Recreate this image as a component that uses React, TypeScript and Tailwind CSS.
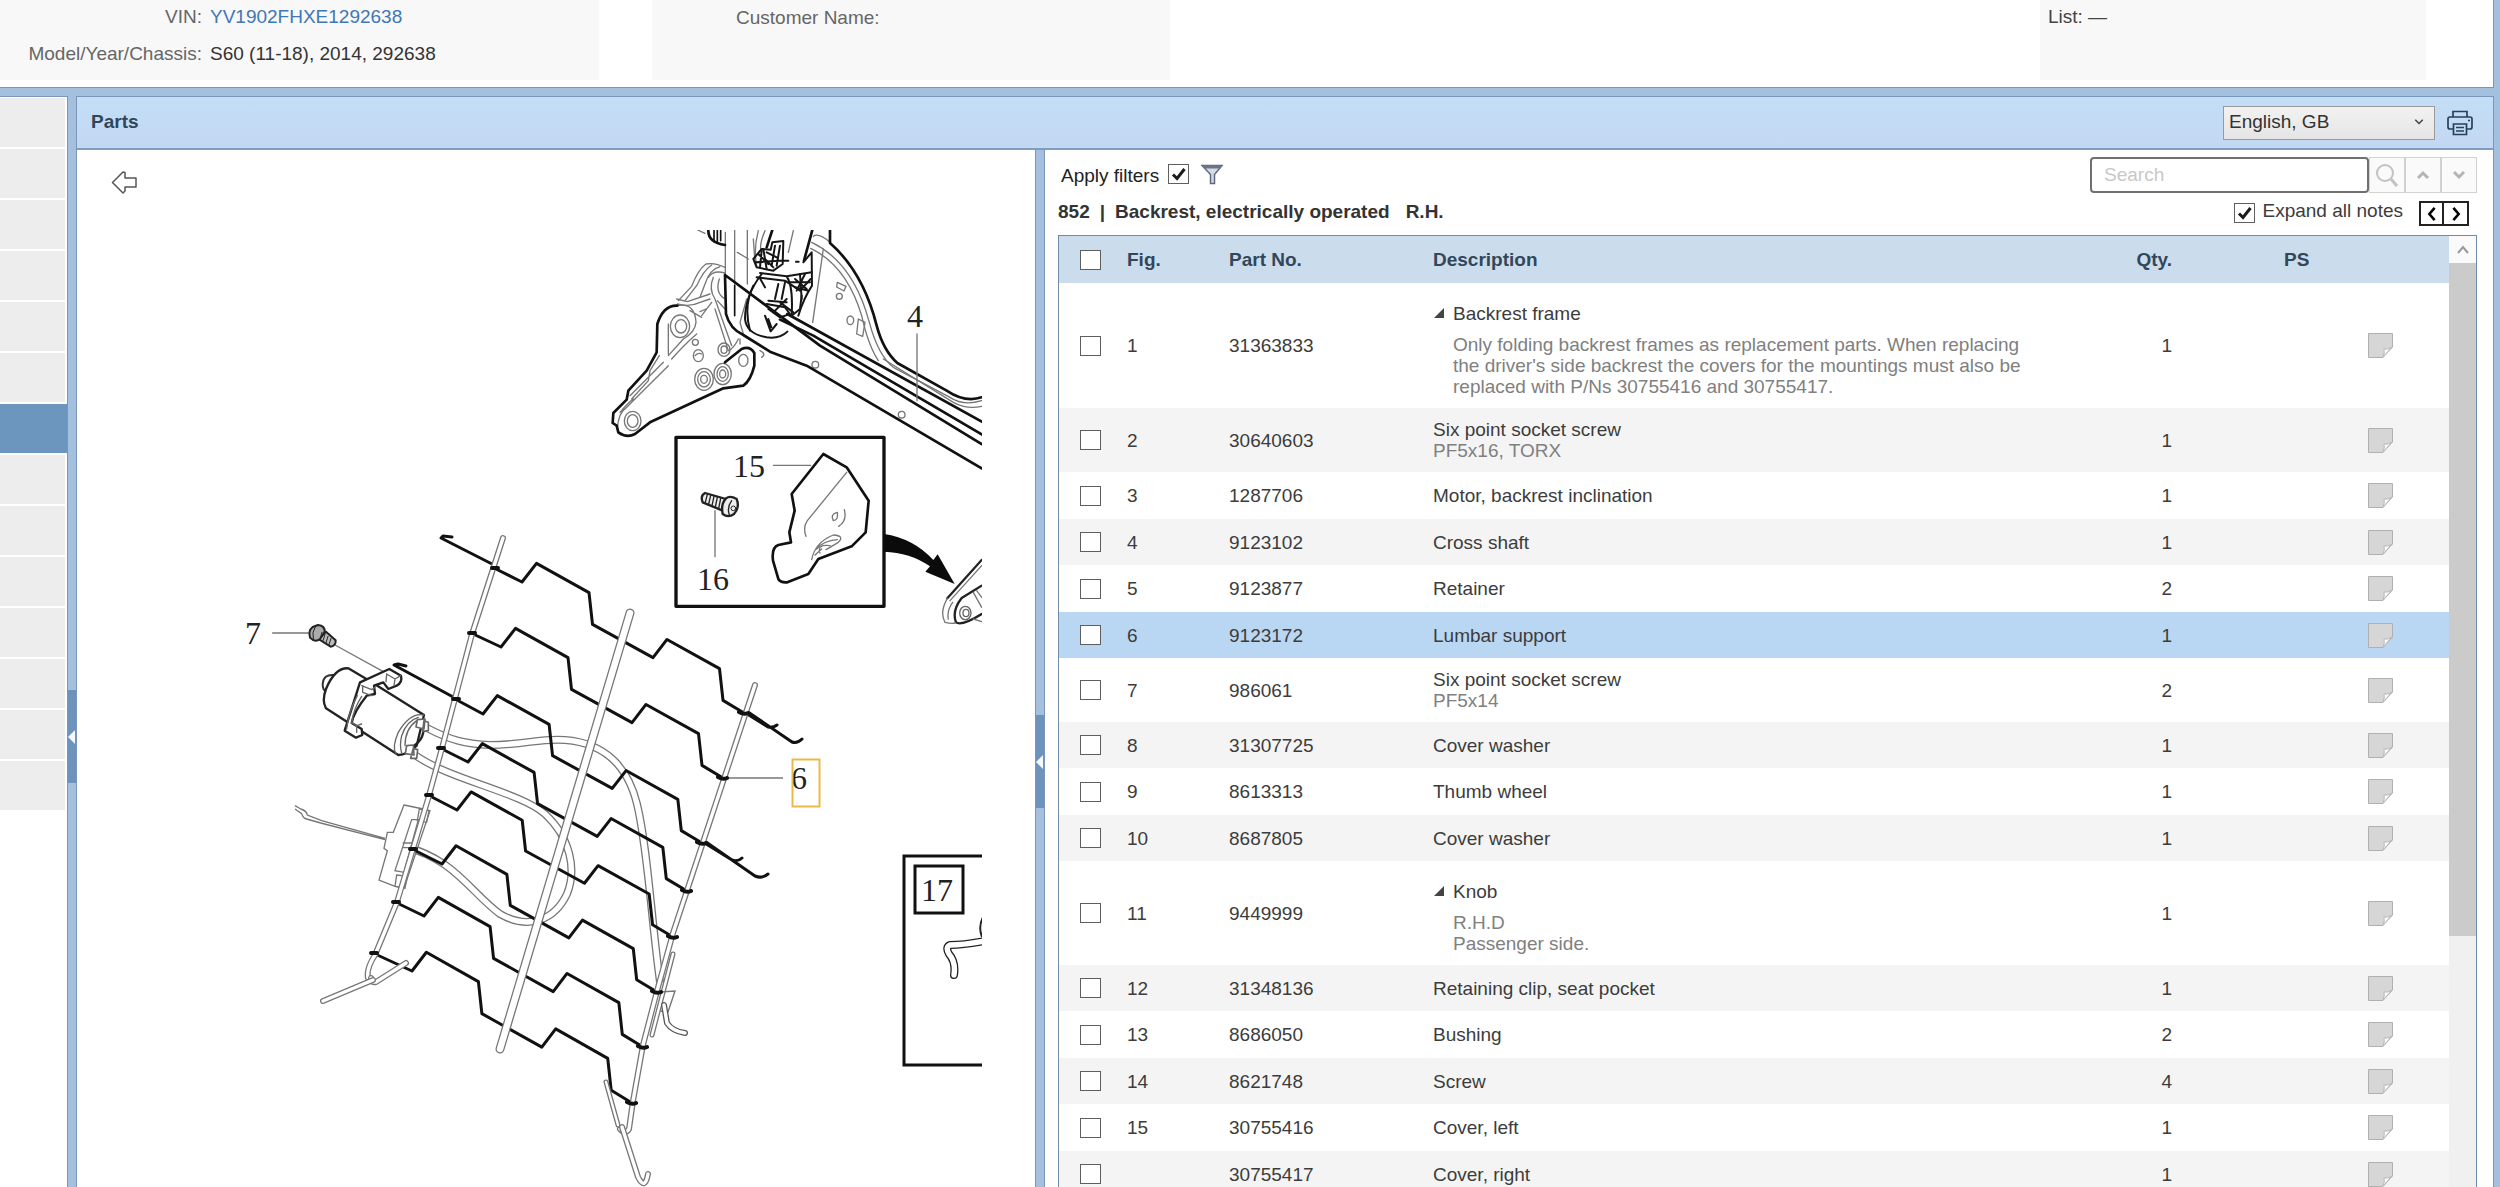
import type { ReactNode } from "react";

type Part = {
  fig: string;
  no: string;
  name: string;
  sub?: string;
  notes?: string[];
  qty: number;
};

const PARTS: Part[] = [
  {
    fig: "1",
    no: "31363833",
    name: "Backrest frame",
    notes: [
      "Only folding backrest frames as replacement parts. When replacing the driver's side backrest the covers for the mountings must also be replaced with P/Ns 30755416 and 30755417.",
    ],
    qty: 1,
  },
  { fig: "2", no: "30640603", name: "Six point socket screw", sub: "PF5x16, TORX", qty: 1 },
  { fig: "3", no: "1287706", name: "Motor, backrest inclination", qty: 1 },
  { fig: "4", no: "9123102", name: "Cross shaft", qty: 1 },
  { fig: "5", no: "9123877", name: "Retainer", qty: 2 },
  { fig: "6", no: "9123172", name: "Lumbar support", qty: 1 },
  { fig: "7", no: "986061", name: "Six point socket screw", sub: "PF5x14", qty: 2 },
  { fig: "8", no: "31307725", name: "Cover washer", qty: 1 },
  { fig: "9", no: "8613313", name: "Thumb wheel", qty: 1 },
  { fig: "10", no: "8687805", name: "Cover washer", qty: 1 },
  { fig: "11", no: "9449999", name: "Knob", notes: ["R.H.D", "Passenger side."], qty: 1 },
  { fig: "12", no: "31348136", name: "Retaining clip, seat pocket", qty: 1 },
  { fig: "13", no: "8686050", name: "Bushing", qty: 2 },
  { fig: "14", no: "8621748", name: "Screw", qty: 4 },
  { fig: "15", no: "30755416", name: "Cover, left", qty: 1 },
  { fig: "", no: "30755417", name: "Cover, right", qty: 1 },
];

const SELECTED_FIG = "6";
const SIDEBAR_ROWS = 14;
const SIDEBAR_SELECTED = 6;

function Checkbox({ id, label, checked = false }: { id: string; label?: string; checked?: boolean }) {
  return (
    <span className="relative block h-5 w-[21px] shrink-0">
      <input
        id={id}
        type="checkbox"
        aria-label={label}
        defaultChecked={checked}
        className="peer block h-5 w-[21px] appearance-none border border-[#5e5e5e] bg-white"
      />
      <svg
        viewBox="0 0 21 20"
        className="pointer-events-none absolute inset-0 hidden peer-checked:block"
        fill="none"
        stroke="#1c1c1c"
        strokeWidth="3"
      >
        <path d="M5 10.5 9 14.5 16.5 5" />
      </svg>
    </span>
  );
}

function NoteIcon() {
  return (
    <svg width="25" height="25" viewBox="0 0 25 25">
      <path d="M.5.5H24.500V14L15 24.500H.5Z" fill="#d6d6d6" stroke="#b0b0b0" />
      <path d="M24 14 15 24Q17 20 16 16Q20 17 24 14Z" fill="#fff" stroke="#b8b8b8" />
    </svg>
  );
}

function PrinterIcon() {
  return (
    <svg width="26" height="26" viewBox="0 0 26 26" fill="none" stroke="#27405c" strokeWidth="1.700">
      <path d="M6 7V1.500H20V7" />
      <path d="M6 19H3Q1 19 1 17V9Q1 7 3 7H23Q25 7 25 9V17Q25 19 23 19H20" />
      <path d="M6.500 14H19.500V24.500H6.500Z" />
      <path d="M9 17.500H17M9 21H17" strokeWidth="1.500" />
      <path d="M21 10.500H23" />
    </svg>
  );
}

function FunnelIcon() {
  return (
    <svg width="22" height="21" viewBox="0 0 22 21">
      <path
        d="M1 1.500H21L13.500 10.500V19.500H9.500V10.500Z"
        fill="#d5dbe6"
        stroke="#606a7c"
        strokeWidth="1.500"
      />
      <path d="M1 1.500H21L19 4.500H3Z" fill="#6c7587" />
    </svg>
  );
}

function Chevron({ d, width = 3, className }: { d: string; width?: number; className?: string }) {
  return (
    <svg viewBox="0 0 16 16" fill="none" stroke="currentColor" strokeWidth={width} className={className}>
      <path d={d} />
    </svg>
  );
}

function Splitter({ label, className }: { label: string; className: string }) {
  return (
    <div className={`flex w-[10px] shrink-0 flex-col border-x border-[#7a97b8] bg-[#a5c0de] ${className}`}>
      <button aria-label={label} className="flex h-[93px] w-full items-center bg-[#6d93bc]">
        <svg width="7" height="14" viewBox="0 0 7 14">
          <path d="M0 7 7 0V14Z" fill="#f4f8fc" />
        </svg>
      </button>
    </div>
  );
}

function InfoBox({ className, children }: { className: string; children: ReactNode }) {
  return <div className={`h-20 bg-[#f8f8f8] ${className}`}>{children}</div>;
}

// Tubes are drawn as a grey stroke with a thinner white one on top
function Tube({ d, w = 7, stroke = "#777" }: { d: string; w?: number; stroke?: string }) {
  return (
    <g fill="none" strokeLinecap="round" strokeLinejoin="round">
      <path d={d} stroke={stroke} strokeWidth={w} />
      <path d={d} stroke="#fff" strokeWidth={w - 2.6} />
    </g>
  );
}

const WIRE_SHAPE = [
  [0, 0],
  [14.5, -18.5],
  [67, 10.5],
  [70.5, 42],
  [131, 75],
  [145, 57],
  [197.5, 86],
  [201, 117.5],
  [222, 130],
];

// clip on the left rod, first bend, clip on the right rod
const WIRES = [
  { left: [494, 569], bend: [522, 583], right: [744, 714] },
  { left: [471, 634], bend: [501, 648], right: [723, 779] },
  { left: [455, 700], bend: [483, 715], right: [702, 844] },
  { left: [440, 749], bend: [468, 763], right: [687, 892] },
  { left: [428, 796], bend: [457, 811], right: [673, 938] },
  { left: [412, 850], bend: [442, 865], right: [657, 993] },
  { left: [395, 903], bend: [424, 917], right: [643, 1048] },
  { left: [373, 954], bend: [412, 972], right: [632, 1104] },
];

function wirePath(wire: (typeof WIRES)[number]) {
  const [bx, by] = wire.bend;
  const sx = (wire.right[0] - bx) / 222;
  const sy = (wire.right[1] - by) / 130;
  const points = WIRE_SHAPE.map(([x, y]) => `${bx + x * sx} ${by + y * sy}`);
  return `M${wire.left.join(" ")} L${points.join(" L")}`;
}

function SeatFrame() {
  return (
    <g transform="translate(600 200) scale(.33333)" fill="none" strokeLinecap="round" strokeLinejoin="round">
      <g stroke="#777" strokeWidth="4">
        <path d="M690 130 Q655 100 640 112 M635 130 Q760 190 808 370 Q835 470 880 505 L1050 595 Q1090 622 1145 605" />
        <path d="M632 148 Q740 200 785 350 Q805 440 835 485 M850 480 L1060 610 Q1100 632 1145 622" />
        <path d="M670 150 L638 370 M712 250 L738 262 L732 276 L710 264Z M775 360 L795 370 L788 412 L770 405Z" />
        <path d="M293 93 L315 103 M376 100 V232 M404 93 V260 M442 93 V255 M412 160 L445 180 M460 120 L465 190 M580 95 L565 160" />
        <path d="M475 95 Q460 150 470 200 M495 95 Q480 130 482 150" />
        <path d="M375 205 Q345 190 318 195 Q295 210 275 262 L235 305 M375 222 Q340 212 325 235 M335 198 Q310 215 290 260 L255 305" />
        <path d="M360 203 Q330 210 315 255 L300 295 M340 235 Q325 270 345 300 L395 440 M358 240 Q345 280 372 298 M352 305 L375 330" />
        <path d="M230 300 L262 308 L330 285 M232 315 Q270 325 300 310 L330 300 M305 350 L335 310 M300 338 L318 330 M345 330 L385 455" />
        <path d="M232 320 Q285 310 288 370 Q285 400 250 420 L205 470 M205 375 V465 M215 480 Q255 435 290 405 M270 335 L305 355" />
        <path d="M178 470 L150 515 L145 545 L95 600 M205 500 L80 625 Q55 640 52 690 M190 490 L90 590 M60 640 Q85 610 100 600" />
        <path d="M415 420 Q400 450 385 455 M480 455 Q500 465 485 475 M420 420 V435 M440 300 L420 370 L430 405" />
        <circle cx="286" cy="430" r="9" />
        <ellipse cx="295" cy="470" rx="15" ry="18" />
        <path d="M285 470 Q295 460 305 465" />
        <ellipse cx="240" cy="382" rx="29" ry="34" />
        <ellipse cx="243" cy="382" rx="17" ry="20" />
        <ellipse cx="312" cy="541" rx="28" ry="33" />
        <ellipse cx="312" cy="541" rx="19" ry="23" />
        <ellipse cx="312" cy="541" rx="10" ry="12" />
        <ellipse cx="368" cy="525" rx="26" ry="32" />
        <ellipse cx="368" cy="525" rx="17" ry="22" />
        <ellipse cx="368" cy="525" rx="9" ry="12" />
        <ellipse cx="372" cy="452" rx="18" ry="20" />
        <ellipse cx="372" cy="452" rx="9" ry="11" />
        <ellipse cx="430" cy="484" rx="14" ry="18" />
        <ellipse cx="98" cy="666" rx="25" ry="29" />
        <ellipse cx="98" cy="666" rx="16" ry="19" />
        <circle cx="646" cy="497" r="10" />
        <circle cx="905" cy="647" r="10" />
        <circle cx="718" cy="292" r="9" />
        <ellipse cx="751" cy="364" rx="10" ry="13" />
      </g>
      <g stroke="#111" strokeWidth="8">
        <path d="M232 320 Q190 318 172 375 L170 460 L140 515 L85 575 L80 602 L40 642 L38 672 L50 680 L55 700 Q80 718 105 705 L150 670 L370 568 L430 560 Q452 545 463 500 V462 Q450 440 425 450 L375 490" />
        <path d="M375 228 L660 440 L1145 735 M375 228 L378 345 Q390 390 430 408 L510 458 L620 500 L1145 808" />
        <path d="M562 345 L1145 668 M540 362 L640 410 L1145 706" />
        <path d="M690 93 V132 Q790 220 830 380 Q850 455 892 492 L1040 575 Q1095 612 1145 595" />
        <path d="M325 95 Q325 130 375 138 M517 93 L500 145 M637 93 L612 185" />
        <path d="M342 95 V128 M352 95 V128 M362 95 V125 M404 260 V350" strokeWidth="5" />
      </g>
      {/* recliner mechanism */}
      <g stroke="#151515" strokeWidth="6">
        <path d="M517 130 L550 126 L548 195 L520 215 L470 205 L460 180 L485 150 L512 152Z" />
        <path d="M525 140 L515 200 M540 140 L530 200 M475 165 L505 195 M485 155 L480 205 M465 190 L540 185 L565 185" />
        <path d="M500 160 L530 175 M495 180 L520 205 M490 150 L500 210 M610 190 L635 160 L636 260 Q610 300 595 350" />
        <path d="M480 222 L560 232 L635 220 M470 235 L555 245 L600 275 L632 240 M560 232 Q580 260 575 350 L600 330 L605 290" />
        <path d="M585 240 L620 270 M600 225 L605 300 M615 225 L590 275 M570 250 L630 250 M585 265 L625 275" />
        <path d="M485 225 Q435 290 435 360 Q440 405 500 415 Q540 420 562 398" />
        <path d="M460 260 Q430 320 450 395 M478 235 L495 265 M500 315 L555 325 L570 345 L540 355 L505 330" />
        <path d="M505 305 L560 310 M520 340 L560 300 M540 310 L580 340 M555 250 L545 300" />
        <path d="M495 350 L512 397 L530 375 M505 360 L514 385 M535 255 L525 300 M588 188 H596" />
      </g>
      <rect x="228" y="715" width="624" height="507" stroke="#111" strokeWidth="10" />
      <path
        d="M670 765 L740 805 L806 905 L797 1000 L755 1042 L655 1080 L625 1125 L562 1150 Q542 1152 535 1140 L519 1085 Q514 1045 535 1038 L573 1030 L568 1000 L584 935 L575 885Z"
        stroke="#111"
        strokeWidth="8"
      />
      <g stroke="#777" strokeWidth="4">
        <path d="M740 820 L622 965 Q608 985 618 1012 M733 932 Q742 965 716 982 M712 940 Q690 945 700 965 Q715 965 712 940" />
        <path d="M635 1082 Q645 1030 700 1008 Q735 1010 715 1030 Q690 1045 678 1052 M650 1050 Q670 1025 712 1022 M660 1062 Q650 1035 690 1040 M645 1068 L665 1050" />
        <path d="M520 799 H632 M345 935 V1073 M951 405 V605" />
      </g>
      {/* screw 16 */}
      <g stroke="#222" strokeWidth="7" fill="#eee">
        <path d="M315 882 L378 900 L368 935 L308 910 Q300 890 315 882Z" />
        <path d="M378 898 Q390 888 410 900 Q420 925 402 945 Q385 958 368 945 Q362 915 378 898Z" />
        <path
          d="M322 886 L316 910 M332 889 L326 915 M342 892 L336 920 M352 895 L346 924 M362 898 L356 928 M395 905 Q380 925 388 948"
          strokeWidth="4"
          fill="none"
        />
        <circle cx="400" cy="928" r="7" strokeWidth="3" />
      </g>
      <path
        d="M852 1005 Q940 1018 1000 1083 L1013 1066 L1064 1155 L976 1118 L990 1102 Q930 1060 852 1058Z"
        fill="#0b0b0b"
      />
      <g stroke="#222" strokeWidth="7">
        <path d="M1145 1083 L1042 1198 M1145 1160 L1085 1197 Q1055 1235 1068 1270 Q1085 1282 1145 1245" />
        <path
          d="M1145 1100 L1050 1205 M1042 1198 Q1018 1240 1035 1270 Q1055 1275 1066 1272 M1058 1210 Q1040 1235 1045 1260 M1120 1180 L1145 1225 M1130 1175 L1145 1195 M1120 1260 L1145 1268"
          stroke="#777"
          strokeWidth="4"
        />
        <ellipse cx="1096" cy="1242" rx="17" ry="20" stroke="#666" strokeWidth="4" />
        <ellipse cx="1098" cy="1242" rx="9" ry="11" stroke="#666" strokeWidth="4" />
      </g>
    </g>
  );
}

function LumbarMotor() {
  return (
    <g transform="translate(220 500) scale(.33333)" fill="#fff" strokeLinecap="round" strokeLinejoin="round">
      <path d="M158 402 H268 M345 438 L490 518" stroke="#777" strokeWidth="4" />
      <g stroke="#222" strokeWidth="6">
        <path d="M318 398 L347 424 Q348 440 332 443 L295 420Z" fill="#bbb" />
        <path d="M294 378 Q315 380 314 398 L300 420 Q285 432 270 416 Q264 395 278 384Z" fill="#aaa" />
        <path
          d="M306 400 L300 422 M315 406 L308 428 M324 412 L317 434 M333 418 L326 440 M285 385 Q275 400 280 420"
          strokeWidth="3"
          fill="none"
        />
      </g>
      <path d="M342 528 Q310 525 308 555 Q308 575 318 575" stroke="#333" strokeWidth="6" />
      <g stroke="#222" strokeWidth="7">
        <path d="M385 508 Q345 505 318 570 Q305 605 318 628 L535 768 Q560 768 590 740 L612 648 L448 545Z" />
        <path d="M420 550 L508 510 L543 530 Q548 550 530 560 L505 570 L490 550 L462 560 L465 585 L440 590 Q400 640 395 672 L425 690 L427 708 L408 716 L374 695Z" />
      </g>
      <g stroke="#666" strokeWidth="4" fill="none">
        <path d="M500 525 L525 540 L522 560 M525 540 L542 530 M500 525 L498 548 M425 560 L455 572 L465 565 M428 560 V580 L455 590 M397 672 L410 680 V700 M410 680 L425 675" />
        <path d="M412 590 Q385 640 380 690 M425 592 Q400 630 395 672" />
        <path d="M612 648 Q570 640 535 700 Q515 745 528 765 M595 655 Q560 665 545 710 Q538 740 545 762 M555 740 Q555 690 590 665" />
      </g>
      <path d="M610 700 Q605 725 585 738" stroke="#222" strokeWidth="7" fill="none" />
      <g stroke="#666" strokeWidth="5">
        <path d="M592 662 L615 660 L612 690 L588 684Z M612 665 L625 670 V695 L608 697Z" />
        <path d="M560 740 L580 738 L582 768 L556 764Z M580 748 L593 752 L590 778 L572 778Z" />
      </g>
    </g>
  );
}

function LumbarSupport() {
  return (
    <g>
      <Tube w={8} d="M427 729 C450 741 465 745 490 746 C525 746 540 739 565 741 C605 744 628 768 637 805 C648 850 652 930 661 990" />
      <Tube w={8} d="M415 756 C450 781 520 793 545 815 C570 838 577 870 567 895 C555 920 530 932 500 915 C470 893 455 860 403 847" />
      <LumbarMotor />

      {/* cable bracket on the left rod */}
      <g transform="translate(280 780) scale(.33333)" fill="none" stroke="#777" strokeWidth="4">
        <path d="M45 80 L62 90 Q80 95 82 108 L125 125 L315 178 M45 90 L65 104 Q70 118 80 120 L122 132 L315 182" />
        <path d="M372 78 L430 90 L450 95 L372 328 L345 322 L297 303 L322 215 L312 208 L322 160 H340Z" fill="#fff" />
        <path d="M395 122 H415 L372 280 L345 275Z M418 90 L447 95 L440 130 L412 125Z M350 288 L382 292 L375 328 L345 322Z M368 192 H400 M366 206 H395" />
      </g>

      <g fill="none" stroke="#111" strokeWidth="3" strokeLinejoin="round" strokeLinecap="round">
        {WIRES.map((wire) => (
          <path key={wire.left[1]} d={wirePath(wire)} />
        ))}
        <path d="M494 566 L441 539 L443 537 L452 538 M455 699 L394 666 L398 665 L406 667" />
        <path d="M744 713 L768 728 Q773 729 777 726 M748 713 L792 743 Q797 745 802 740" />
        <path d="M703 843 L732 861 Q738 863 742 859 M706 843 L755 877 Q762 880 768 875" />
      </g>

      <Tube w={6} d="M503 539 L472 635 L442 749 L428 800 L397 903 L375 956 Q366 970 368 979" />
      <Tube w={6} d="M406 964 L376 983 Q370 984 371 979" />
      <Tube w={6} d="M323 1002 L373 981" />
      <Tube w={9} d="M630 614 L500 1050" />
      <Tube w={5} d="M673 955 L652 1036" />
      <Tube w={6} d="M755 686 L673 934 L657 992 L643 1046 L633 1102 L629 1130 Q625 1136 620 1130" />
      <Tube w={5} d="M606 1083 L618 1126" />
      <Tube w={6} d="M622 1128 L638 1178 Q645 1192 648 1175" />
      <path d="M660 993 L675 992 L668 1013 L660 1012" fill="none" stroke="#777" strokeWidth="1.400" />
      <Tube w={6} stroke="#555" d="M664 1006 L667 1024 Q672 1032 685 1034" />

      <g fill="none" stroke="#111" strokeWidth="4" strokeLinecap="round">
        {WIRES.map((wire) => (
          <path
            key={wire.left[1]}
            d={`M${wire.left[0] - 2} ${wire.left[1]} h6 M${wire.right[0] - 5} ${wire.right[1] - 1} q5 3 9 1`}
          />
        ))}
      </g>
      <path d="M729 779 H783" stroke="#777" strokeWidth="1.400" />
    </g>
  );
}

function Diagram() {
  return (
    <svg
      role="img"
      aria-label="Backrest, exploded view"
      viewBox="77 201 957 987"
      className="h-[987px] w-[957px] max-w-none shrink-0"
    >
      <clipPath id="sheet">
        <path d="M77 231H982V1188H77Z" />
      </clipPath>
      <g clipPath="url(#sheet)">
        <SeatFrame />
        <LumbarSupport />
        <path d="M990 857 H904 V1066 H990" fill="none" stroke="#111" strokeWidth="3" />
        <rect x="915" y="867" width="48" height="47" fill="none" stroke="#111" strokeWidth="3" />
        <Tube w={8} stroke="#222" d="M990 941 Q965 946 950 946 Q945 948 949 955 Q956 963 954 976" />
        <path d="M983 918 Q978 928 982 938" fill="none" stroke="#222" strokeWidth="2" />
      </g>
      <g fill="#222" fontSize="32" style={{ fontFamily: '"Liberation Serif", serif' }}>
        <text x="907" y="328">4</text>
        <text x="733" y="478">15</text>
        <text x="697" y="591">16</text>
        <text x="245" y="645">7</text>
        <text x="791" y="790">6</text>
        <text x="921" y="902">17</text>
      </g>
      <rect x="792.500" y="760.500" width="27" height="47" fill="none" stroke="#e9b949" strokeWidth="2" />
    </svg>
  );
}

function Description({ part }: { part: Part }) {
  if (!part.notes) {
    return (
      <>
        <div>{part.name}</div>
        {part.sub && <div className="text-[#808080]">{part.sub}</div>}
      </>
    );
  }
  return (
    <div className="flex gap-2 pt-2">
      <svg width="12" height="12" viewBox="0 0 12 12" className="mt-1 shrink-0">
        <path d="M11 1V11H1Z" fill="#444" />
      </svg>
      <div>
        <div>{part.name}</div>
        <div className="max-w-[580px] pt-[10px] text-[#808080]">
          {part.notes.map((note) => (
            <p key={note}>{note}</p>
          ))}
        </div>
      </div>
    </div>
  );
}

function rowStyle(part: Part, index: number) {
  const height = part.notes
    ? part.notes.length > 1
      ? "h-[104px]"
      : "h-[125px]"
    : part.sub
      ? "h-16"
      : "odd:h-[47px] even:h-[46px]";
  const color = part.fig === SELECTED_FIG ? "bg-[#b9d6f2]" : index % 2 ? "bg-[#f4f4f4]" : "bg-white";
  return `${height} ${color}`;
}

function PartsTable() {
  return (
    <div className="flex min-h-0 flex-1 overflow-hidden border border-b-0 border-[#6f8ba8]">
      <div className="min-w-0 flex-1">
        <table className="w-full table-fixed leading-[21px] text-[#3c3c3c]">
          <colgroup>
            <col className="w-[68px]" />
            <col className="w-[102px]" />
            <col className="w-[204px]" />
            <col />
            <col className="w-[80px]" />
            <col className="w-[196px]" />
            <col className="w-[81px]" />
          </colgroup>
          <thead>
            <tr className="h-[47px] bg-[#cbdded] text-left text-[#33475a]">
              <th className="pl-[21px]">
                <Checkbox id="all" label="Select all" />
              </th>
              <th>Fig.</th>
              <th>Part No.</th>
              <th>Description</th>
              <th className="text-right">Qty.</th>
              <th className="pl-28">PS</th>
              <th aria-label="Notes" />
            </tr>
          </thead>
          <tbody>
            {PARTS.map((part, i) => (
              <tr key={part.no} className={rowStyle(part, i)}>
                <td className="pl-[21px]">
                  <Checkbox id={`part-${part.no}`} label={`Select ${part.name}`} />
                </td>
                <td>{part.fig}</td>
                <td>{part.no}</td>
                <td>
                  <Description part={part} />
                </td>
                <td className="text-right">{part.qty}</td>
                <td />
                <td>
                  <NoteIcon />
                </td>
              </tr>
            ))}
          </tbody>
        </table>
      </div>
      <div className="flex w-[27px] shrink-0 flex-col bg-[#f0f0f0]">
        <button aria-label="Scroll up" className="grid h-[27px] place-items-center bg-[#fafafa] text-[#999]">
          <Chevron d="M3 11 8 5 13 11" width={2} className="size-4" />
        </button>
        <div className="h-[673px] bg-[#cbcbcb]" />
      </div>
    </div>
  );
}

function PartsPanel() {
  return (
    <section className="flex min-w-0 flex-1 flex-col bg-white pr-4 pl-[13px]">
      <div className="flex h-[85px] shrink-0 justify-between">
        <div className="pt-[14px]">
          <div className="flex h-6 items-center pl-[3px] text-[#222]">
            <label htmlFor="apply-filters">Apply filters</label>
            <span className="-mt-1 ml-[9px] flex gap-3">
              <Checkbox id="apply-filters" checked />
              <FunnelIcon />
            </span>
          </div>
          <h2 className="mt-3 flex leading-6 font-bold text-[#333]">
            <span>852</span>
            <span className="mx-[10px]">|</span>
            <span>Backrest, electrically operated</span>
            <span className="ml-4">R.H.</span>
          </h2>
        </div>
        <div className="flex flex-col items-end pt-[7px]">
          <div className="flex h-9">
            <input
              type="text"
              aria-label="Search"
              placeholder="Search"
              className="w-[279px] rounded border-2 border-[#707070] px-3 placeholder:text-[#c8c8c8]"
            />
            <button
              aria-label="Find"
              className="grid w-9 place-items-center border border-[#d2d2d2] bg-[#fafafa] text-[#c2c2c2]"
            >
              <svg viewBox="0 0 24 24" className="size-6" fill="none" stroke="currentColor" strokeWidth="2">
                <circle cx="10" cy="10" r="8" />
                <path d="M16 16 22 23" strokeWidth="3" />
              </svg>
            </button>
            <button
              aria-label="Previous match"
              className="grid w-9 place-items-center border border-[#d2d2d2] bg-[#fafafa] text-[#b4b4b4]"
            >
              <Chevron d="M3 11 8 6 13 11" className="size-4" />
            </button>
            <button
              aria-label="Next match"
              className="grid w-9 place-items-center border border-[#d2d2d2] bg-[#fafafa] text-[#b4b4b4]"
            >
              <Chevron d="M3 5 8 10 13 5" className="size-4" />
            </button>
          </div>
          <div className="flex pt-2 pr-2">
            <span className="mt-[2px] mr-2">
              <Checkbox id="expand-notes" checked />
            </span>
            <label htmlFor="expand-notes" className="mr-4 leading-5 text-[#3c3c3c]">
              Expand all notes
            </label>
            <button aria-label="Previous" className="grid h-[25px] w-[25px] place-items-center border-2 border-[#222]">
              <Chevron d="M11 1 5 8 11 15" className="size-[14px]" />
            </button>
            <button
              aria-label="Next"
              className="grid h-[25px] w-[25px] place-items-center border-2 border-l-0 border-[#222]"
            >
              <Chevron d="M5 1 11 8 5 15" className="size-[14px]" />
            </button>
          </div>
        </div>
      </div>
      <PartsTable />
    </section>
  );
}

export default function App() {
  return (
    <div className="flex h-screen flex-col overflow-hidden bg-[#a3c0df] pr-[6px] font-['Liberation_Sans',Arial,sans-serif] text-[19px]">
      <header className="mb-2 flex h-[88px] shrink-0 border-r border-b border-[#7a97b8] bg-white leading-6 text-[#666]">
        <InfoBox className="w-[599px]">
          <dl className="grid grid-cols-[202px_1fr] gap-x-2 gap-y-[13px] pt-[5px]">
            <dt className="text-right">VIN:</dt>
            <dd>
              <a href="#vin" className="text-[#4177b5]">
                YV1902FHXE1292638
              </a>
            </dd>
            <dt className="text-right">Model/Year/Chassis:</dt>
            <dd className="text-[#333]">S60 (11-18), 2014, 292638</dd>
          </dl>
        </InfoBox>
        <InfoBox className="ml-[53px] w-[518px] pt-[6px] pl-[84px]">Customer Name:</InfoBox>
        <InfoBox className="mr-[67px] ml-auto w-[386px] pt-[5px] pl-2">
          <span className="text-[#444]">List: —</span>
        </InfoBox>
      </header>

      <div className="flex min-h-0 flex-1">
        <aside className="w-[67px] shrink-0 overflow-hidden border-t border-[#7a97b8] bg-white pt-px">
          <ul>
            {Array.from({ length: SIDEBAR_ROWS }, (_, i) => (
              <li
                key={i}
                className={
                  i === SIDEBAR_SELECTED ? "mb-[2px] h-[49px] bg-[#6d96bf]" : "mr-[2px] mb-[2px] h-[49px] bg-[#eeeded]"
                }
              />
            ))}
          </ul>
        </aside>
        <Splitter label="Collapse list" className="pt-[594px]" />
        <main className="flex min-w-0 flex-1 flex-col border-t border-r border-[#7a97b8]">
          <div className="flex h-[53px] shrink-0 items-center border-b-2 border-[#7f9dbf] bg-linear-to-b from-[#c3def8] to-[#c3d8f2] pr-5 pl-[14px]">
            <h1 className="font-bold text-[#30465c]">Parts</h1>
            <div className="relative ml-auto">
              <select
                aria-label="Language"
                className="h-[34px] w-[212px] appearance-none border border-[#9a9a9a] bg-linear-to-b from-[#f2f2f2] to-[#e5e5e5] pl-[5px] text-[#333]"
              >
                <option>English, GB</option>
              </select>
              <Chevron
                d="M3 5 8 10 13 5"
                width={2}
                className="pointer-events-none absolute top-[10px] right-[10px] size-3 text-[#444]"
              />
            </div>
            <button aria-label="Print" className="ml-3">
              <PrinterIcon />
            </button>
          </div>
          <div className="flex min-h-0 flex-1">
            <section className="flex w-[958px] shrink-0 flex-col overflow-hidden bg-white">
              <div className="h-[50px] shrink-0 pt-[21px] pl-[34px]">
                <button aria-label="Back" className="block">
                  <svg width="26" height="23" viewBox="0 0 26 23" fill="none" stroke="#555" strokeWidth="1.500">
                    <path d="M12 1 1.500 11.500 12 22 14 20V16H25V7H14V1.500Z" strokeLinejoin="round" />
                  </svg>
                </button>
              </div>
              <Diagram />
            </section>
            <Splitter label="Collapse drawing" className="pt-[565px]" />
            <PartsPanel />
          </div>
        </main>
      </div>
    </div>
  );
}
